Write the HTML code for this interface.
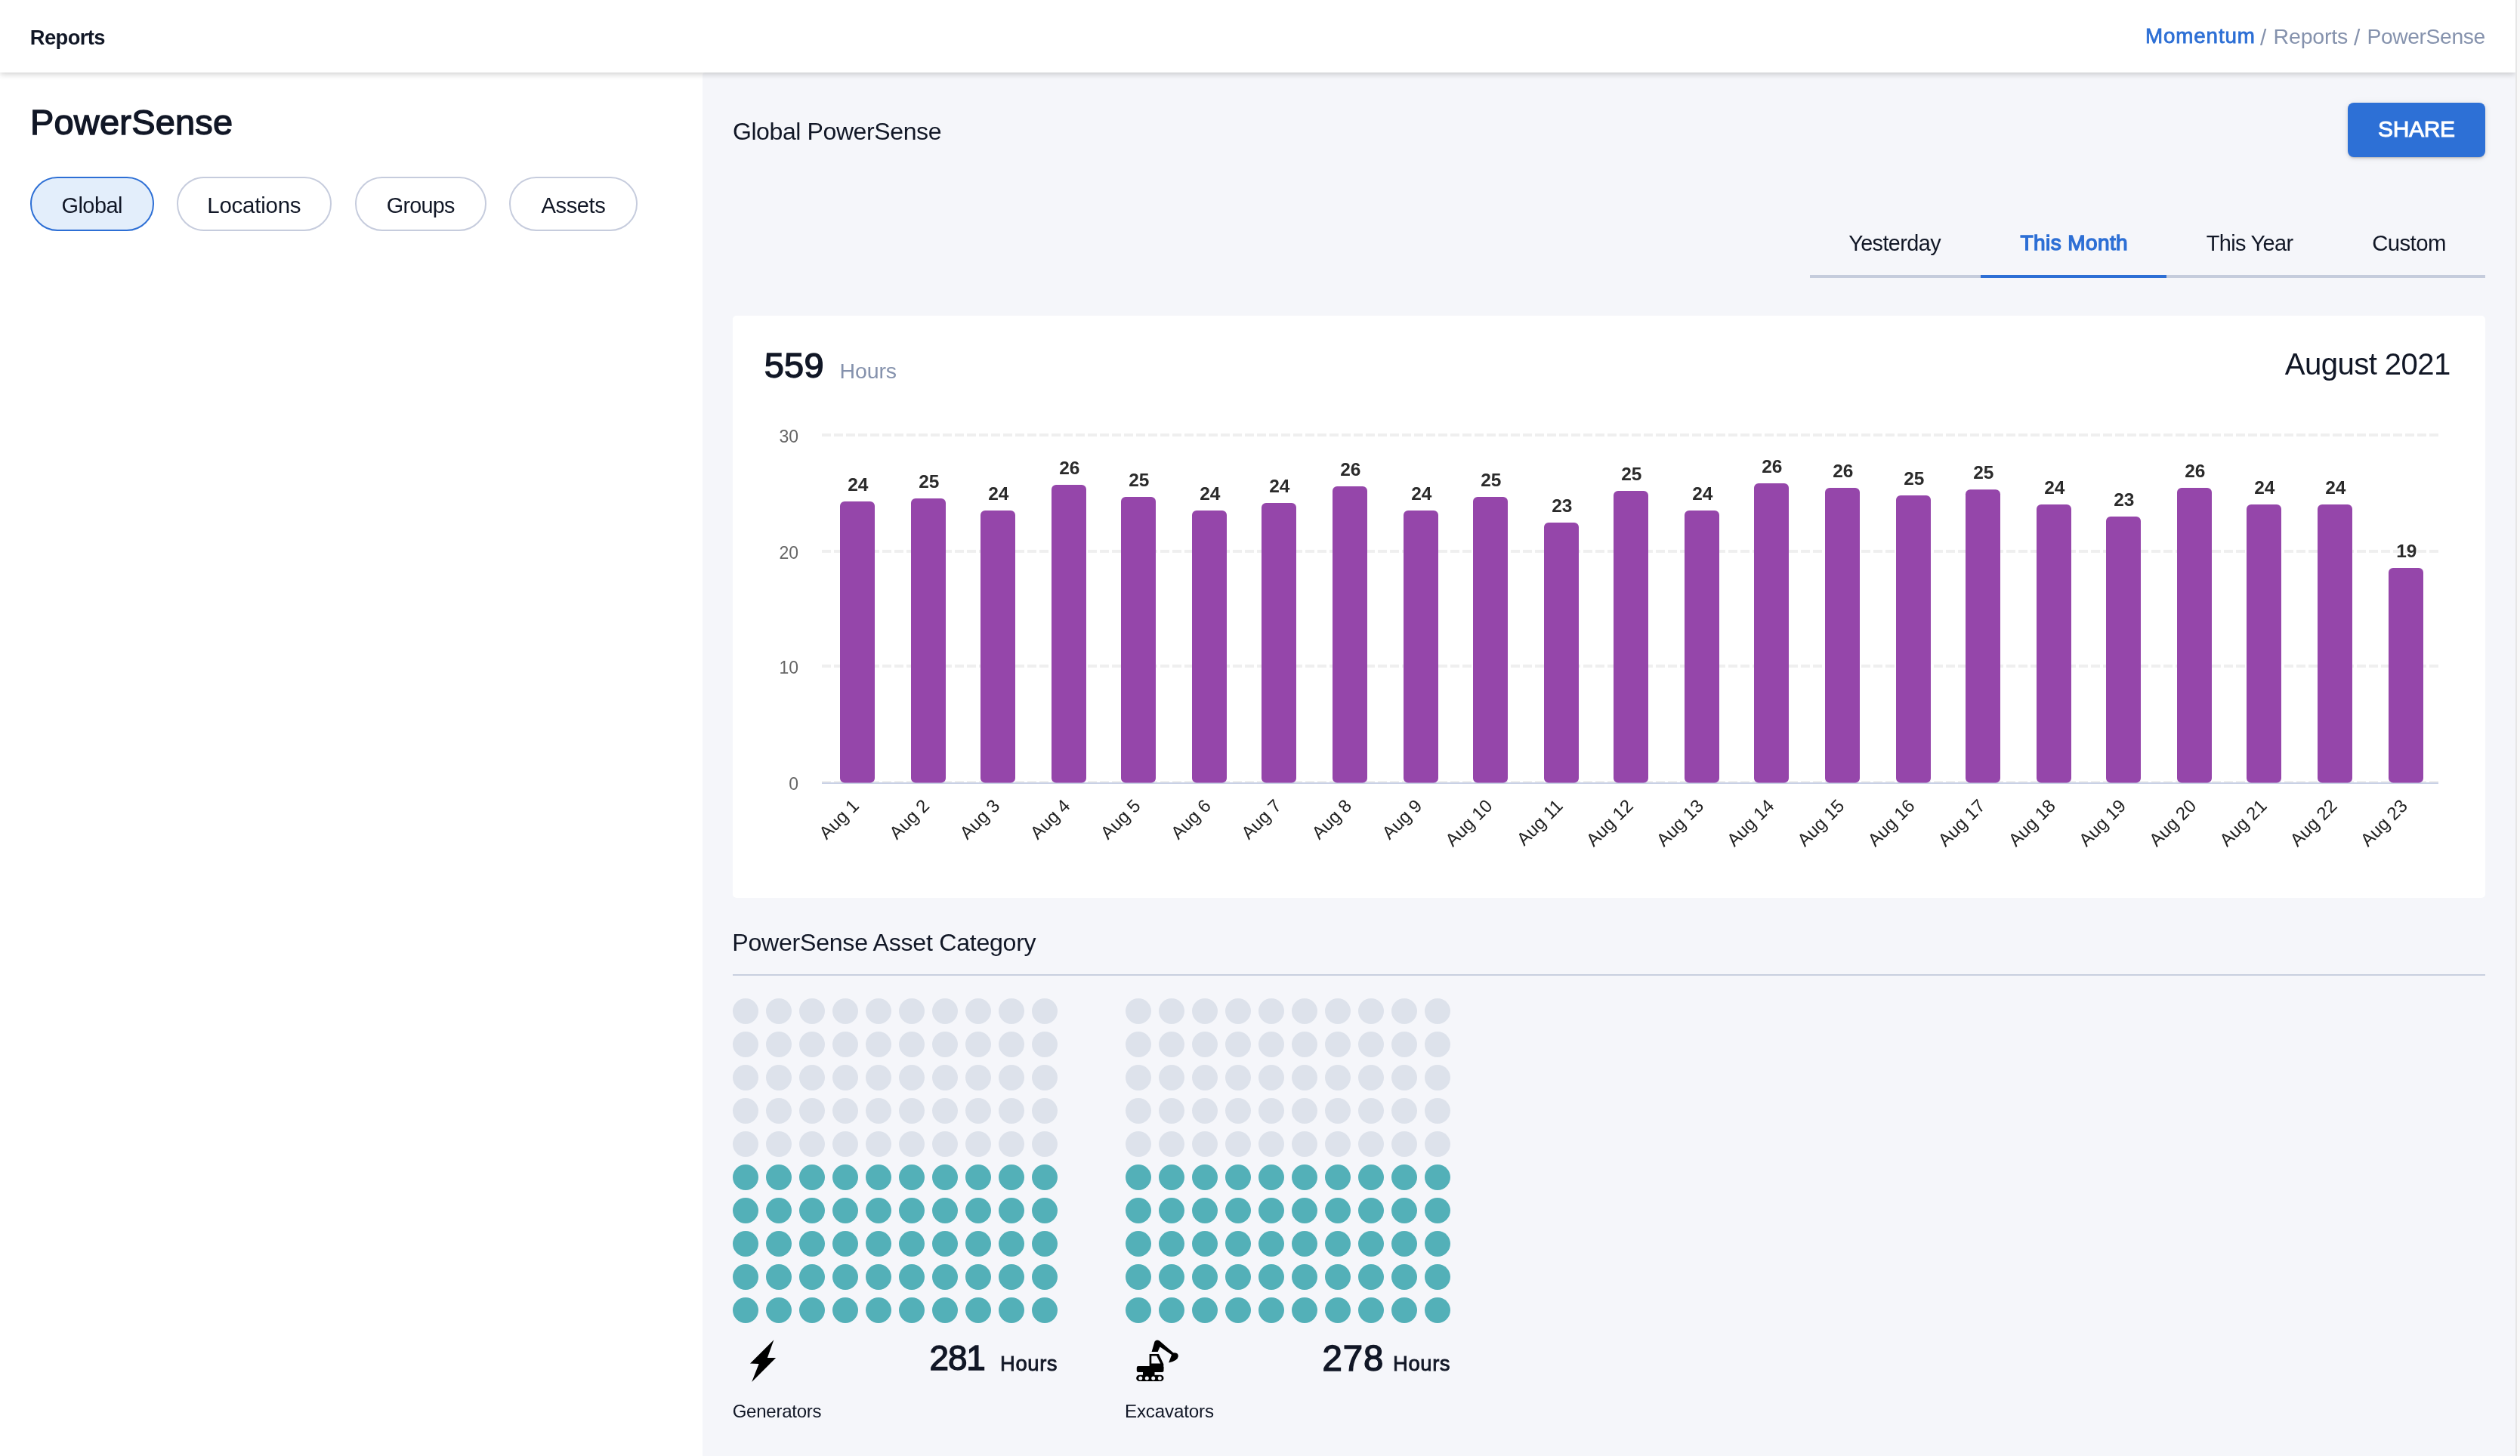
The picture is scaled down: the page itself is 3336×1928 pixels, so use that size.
<!DOCTYPE html>
<html><head><meta charset="utf-8"><title>PowerSense</title>
<style>
html,body{margin:0;padding:0;}
body{width:3336px;height:1928px;overflow:hidden;position:relative;background:#ffffff;font-family:"Liberation Sans",sans-serif;}
.t{position:absolute;white-space:nowrap;font-family:"Liberation Sans",sans-serif;}
#right{position:absolute;left:930px;top:96px;width:2400px;height:1832px;background:#f5f6fa;border-top-left-radius:4px;}
#sb{position:absolute;left:3330px;top:0;width:6px;height:1928px;background:#f8f8f8;border-left:2px solid #e6e6e6;box-sizing:border-box;z-index:6;}
#hdr{position:absolute;left:0;top:0;width:3330px;height:96px;background:#fff;box-shadow:0 2px 8px rgba(0,0,0,0.2);z-index:5;}
.pill{position:absolute;top:234px;height:72px;box-sizing:border-box;border:2px solid #c6ccdd;border-radius:36px;background:#fff;}
.pill.on{border-color:#2d6fd5;background:#e3eefb;}
#share{position:absolute;left:3108px;top:136px;width:182px;height:72px;background:#2d70d6;border-radius:8px;box-shadow:0 3px 2px -2px rgba(0,0,0,0.16),0 2px 4px 0 rgba(0,0,0,0.1),0 1px 10px 0 rgba(0,0,0,0.08);}
#tabline{position:absolute;left:2396px;top:364px;width:894px;height:4px;background:#c5ccdc;}
#tabon{position:absolute;left:2622px;top:364px;width:246px;height:4px;background:#2d6fd5;}
#card{position:absolute;left:970px;top:418px;width:2320px;height:771px;background:#fff;border-radius:5px;}
#divider{position:absolute;left:970px;top:1290px;width:2320px;height:2px;background:#c8cfdf;}
svg{position:absolute;left:0;top:0;overflow:visible;will-change:transform;}
#fg{position:absolute;left:0;top:0;z-index:10;will-change:transform;}
.vl{font-family:"Liberation Sans",sans-serif;font-weight:700;font-size:24.5px;fill:#2b2b2b;text-anchor:middle;}
.xl{font-family:"Liberation Sans",sans-serif;font-size:24px;fill:#222;text-anchor:end;}
.yl{font-family:"Liberation Sans",sans-serif;font-size:23px;fill:#666;text-anchor:end;}
</style></head>
<body>
<div id="right"></div>
<div id="sb"></div>
<div id="hdr"></div>
<div class="pill on" style="left:40px;width:164px"></div>
<div class="pill" style="left:234px;width:205px"></div>
<div class="pill" style="left:470px;width:174px"></div>
<div class="pill" style="left:674px;width:170px"></div>
<div id="share"></div>
<div id="tabline"></div>
<div id="tabon"></div>
<div id="card"></div>
<div id="divider"></div>
<svg width="3336" height="1928" viewBox="0 0 3336 1928">
<line x1="1088" y1="576" x2="3228" y2="576" stroke="#efefef" stroke-width="4" stroke-dasharray="12 4"/>
<line x1="1088" y1="730" x2="3228" y2="730" stroke="#efefef" stroke-width="4" stroke-dasharray="12 4"/>
<line x1="1088" y1="882" x2="3228" y2="882" stroke="#efefef" stroke-width="4" stroke-dasharray="12 4"/>
<line x1="1088" y1="1036" x2="3228" y2="1036" stroke="#efefef" stroke-width="4" stroke-dasharray="12 4"/>
<rect x="1088" y="1036" width="2140" height="2" fill="#c9d1e5"/>
<rect x="1112.00" y="663.90" width="46.0" height="372.60" rx="6" ry="6" fill="#9546aa"/>
<text x="1135.80" y="649.90" class="vl">24</text>
<text transform="translate(1138.50,1068.5) rotate(-45)" class="xl">Aug 1</text>
<rect x="1206.00" y="660.00" width="46.0" height="376.50" rx="6" ry="6" fill="#9546aa"/>
<text x="1229.80" y="646.00" class="vl">25</text>
<text transform="translate(1231.68,1068.5) rotate(-45)" class="xl">Aug 2</text>
<rect x="1298.00" y="675.90" width="46.0" height="360.60" rx="6" ry="6" fill="#9546aa"/>
<text x="1321.80" y="661.90" class="vl">24</text>
<text transform="translate(1324.86,1068.5) rotate(-45)" class="xl">Aug 3</text>
<rect x="1392.00" y="642.00" width="46.0" height="394.50" rx="6" ry="6" fill="#9546aa"/>
<text x="1415.80" y="628.00" class="vl">26</text>
<text transform="translate(1418.04,1068.5) rotate(-45)" class="xl">Aug 4</text>
<rect x="1484.00" y="657.90" width="46.0" height="378.60" rx="6" ry="6" fill="#9546aa"/>
<text x="1507.80" y="643.90" class="vl">25</text>
<text transform="translate(1511.22,1068.5) rotate(-45)" class="xl">Aug 5</text>
<rect x="1578.00" y="675.90" width="46.0" height="360.60" rx="6" ry="6" fill="#9546aa"/>
<text x="1601.80" y="661.90" class="vl">24</text>
<text transform="translate(1604.40,1068.5) rotate(-45)" class="xl">Aug 6</text>
<rect x="1670.00" y="666.00" width="46.0" height="370.50" rx="6" ry="6" fill="#9546aa"/>
<text x="1693.80" y="652.00" class="vl">24</text>
<text transform="translate(1697.58,1068.5) rotate(-45)" class="xl">Aug 7</text>
<rect x="1764.00" y="643.90" width="46.0" height="392.60" rx="6" ry="6" fill="#9546aa"/>
<text x="1787.80" y="629.90" class="vl">26</text>
<text transform="translate(1790.76,1068.5) rotate(-45)" class="xl">Aug 8</text>
<rect x="1858.00" y="675.90" width="46.0" height="360.60" rx="6" ry="6" fill="#9546aa"/>
<text x="1881.80" y="661.90" class="vl">24</text>
<text transform="translate(1883.94,1068.5) rotate(-45)" class="xl">Aug 9</text>
<rect x="1950.00" y="657.90" width="46.0" height="378.60" rx="6" ry="6" fill="#9546aa"/>
<text x="1973.80" y="643.90" class="vl">25</text>
<text transform="translate(1977.12,1068.5) rotate(-45)" class="xl">Aug 10</text>
<rect x="2044.00" y="692.10" width="46.0" height="344.40" rx="6" ry="6" fill="#9546aa"/>
<text x="2067.80" y="678.10" class="vl">23</text>
<text transform="translate(2070.30,1068.5) rotate(-45)" class="xl">Aug 11</text>
<rect x="2136.00" y="649.90" width="46.0" height="386.60" rx="6" ry="6" fill="#9546aa"/>
<text x="2159.80" y="635.90" class="vl">25</text>
<text transform="translate(2163.48,1068.5) rotate(-45)" class="xl">Aug 12</text>
<rect x="2230.00" y="675.90" width="46.0" height="360.60" rx="6" ry="6" fill="#9546aa"/>
<text x="2253.80" y="661.90" class="vl">24</text>
<text transform="translate(2256.66,1068.5) rotate(-45)" class="xl">Aug 13</text>
<rect x="2322.00" y="640.10" width="46.0" height="396.40" rx="6" ry="6" fill="#9546aa"/>
<text x="2345.80" y="626.10" class="vl">26</text>
<text transform="translate(2349.84,1068.5) rotate(-45)" class="xl">Aug 14</text>
<rect x="2416.00" y="646.10" width="46.0" height="390.40" rx="6" ry="6" fill="#9546aa"/>
<text x="2439.80" y="632.10" class="vl">26</text>
<text transform="translate(2443.02,1068.5) rotate(-45)" class="xl">Aug 15</text>
<rect x="2510.00" y="656.10" width="46.0" height="380.40" rx="6" ry="6" fill="#9546aa"/>
<text x="2533.80" y="642.10" class="vl">25</text>
<text transform="translate(2536.20,1068.5) rotate(-45)" class="xl">Aug 16</text>
<rect x="2602.00" y="648.20" width="46.0" height="388.30" rx="6" ry="6" fill="#9546aa"/>
<text x="2625.80" y="634.20" class="vl">25</text>
<text transform="translate(2629.38,1068.5) rotate(-45)" class="xl">Aug 17</text>
<rect x="2696.00" y="668.10" width="46.0" height="368.40" rx="6" ry="6" fill="#9546aa"/>
<text x="2719.80" y="654.10" class="vl">24</text>
<text transform="translate(2722.56,1068.5) rotate(-45)" class="xl">Aug 18</text>
<rect x="2788.00" y="684.00" width="46.0" height="352.50" rx="6" ry="6" fill="#9546aa"/>
<text x="2811.80" y="670.00" class="vl">23</text>
<text transform="translate(2815.74,1068.5) rotate(-45)" class="xl">Aug 19</text>
<rect x="2882.00" y="645.90" width="46.0" height="390.60" rx="6" ry="6" fill="#9546aa"/>
<text x="2905.80" y="631.90" class="vl">26</text>
<text transform="translate(2908.92,1068.5) rotate(-45)" class="xl">Aug 20</text>
<rect x="2974.00" y="668.10" width="46.0" height="368.40" rx="6" ry="6" fill="#9546aa"/>
<text x="2997.80" y="654.10" class="vl">24</text>
<text transform="translate(3002.10,1068.5) rotate(-45)" class="xl">Aug 21</text>
<rect x="3068.00" y="668.10" width="46.0" height="368.40" rx="6" ry="6" fill="#9546aa"/>
<text x="3091.80" y="654.10" class="vl">24</text>
<text transform="translate(3095.28,1068.5) rotate(-45)" class="xl">Aug 22</text>
<rect x="3162.00" y="752.00" width="46.0" height="284.50" rx="6" ry="6" fill="#9546aa"/>
<text x="3185.80" y="738.00" class="vl">19</text>
<text transform="translate(3188.46,1068.5) rotate(-45)" class="xl">Aug 23</text>
<text x="1057" y="586.20" class="yl">30</text>
<text x="1057" y="740.20" class="yl">20</text>
<text x="1057" y="892.20" class="yl">10</text>
<text x="1057" y="1046.20" class="yl">0</text>
<circle cx="987" cy="1339" r="17" fill="#dde2eb"/>
<circle cx="1031" cy="1339" r="17" fill="#dde2eb"/>
<circle cx="1075" cy="1339" r="17" fill="#dde2eb"/>
<circle cx="1119" cy="1339" r="17" fill="#dde2eb"/>
<circle cx="1163" cy="1339" r="17" fill="#dde2eb"/>
<circle cx="1207" cy="1339" r="17" fill="#dde2eb"/>
<circle cx="1251" cy="1339" r="17" fill="#dde2eb"/>
<circle cx="1295" cy="1339" r="17" fill="#dde2eb"/>
<circle cx="1339" cy="1339" r="17" fill="#dde2eb"/>
<circle cx="1383" cy="1339" r="17" fill="#dde2eb"/>
<circle cx="987" cy="1383" r="17" fill="#dde2eb"/>
<circle cx="1031" cy="1383" r="17" fill="#dde2eb"/>
<circle cx="1075" cy="1383" r="17" fill="#dde2eb"/>
<circle cx="1119" cy="1383" r="17" fill="#dde2eb"/>
<circle cx="1163" cy="1383" r="17" fill="#dde2eb"/>
<circle cx="1207" cy="1383" r="17" fill="#dde2eb"/>
<circle cx="1251" cy="1383" r="17" fill="#dde2eb"/>
<circle cx="1295" cy="1383" r="17" fill="#dde2eb"/>
<circle cx="1339" cy="1383" r="17" fill="#dde2eb"/>
<circle cx="1383" cy="1383" r="17" fill="#dde2eb"/>
<circle cx="987" cy="1427" r="17" fill="#dde2eb"/>
<circle cx="1031" cy="1427" r="17" fill="#dde2eb"/>
<circle cx="1075" cy="1427" r="17" fill="#dde2eb"/>
<circle cx="1119" cy="1427" r="17" fill="#dde2eb"/>
<circle cx="1163" cy="1427" r="17" fill="#dde2eb"/>
<circle cx="1207" cy="1427" r="17" fill="#dde2eb"/>
<circle cx="1251" cy="1427" r="17" fill="#dde2eb"/>
<circle cx="1295" cy="1427" r="17" fill="#dde2eb"/>
<circle cx="1339" cy="1427" r="17" fill="#dde2eb"/>
<circle cx="1383" cy="1427" r="17" fill="#dde2eb"/>
<circle cx="987" cy="1471" r="17" fill="#dde2eb"/>
<circle cx="1031" cy="1471" r="17" fill="#dde2eb"/>
<circle cx="1075" cy="1471" r="17" fill="#dde2eb"/>
<circle cx="1119" cy="1471" r="17" fill="#dde2eb"/>
<circle cx="1163" cy="1471" r="17" fill="#dde2eb"/>
<circle cx="1207" cy="1471" r="17" fill="#dde2eb"/>
<circle cx="1251" cy="1471" r="17" fill="#dde2eb"/>
<circle cx="1295" cy="1471" r="17" fill="#dde2eb"/>
<circle cx="1339" cy="1471" r="17" fill="#dde2eb"/>
<circle cx="1383" cy="1471" r="17" fill="#dde2eb"/>
<circle cx="987" cy="1515" r="17" fill="#dde2eb"/>
<circle cx="1031" cy="1515" r="17" fill="#dde2eb"/>
<circle cx="1075" cy="1515" r="17" fill="#dde2eb"/>
<circle cx="1119" cy="1515" r="17" fill="#dde2eb"/>
<circle cx="1163" cy="1515" r="17" fill="#dde2eb"/>
<circle cx="1207" cy="1515" r="17" fill="#dde2eb"/>
<circle cx="1251" cy="1515" r="17" fill="#dde2eb"/>
<circle cx="1295" cy="1515" r="17" fill="#dde2eb"/>
<circle cx="1339" cy="1515" r="17" fill="#dde2eb"/>
<circle cx="1383" cy="1515" r="17" fill="#dde2eb"/>
<circle cx="987" cy="1559" r="17" fill="#53b0b8"/>
<circle cx="1031" cy="1559" r="17" fill="#53b0b8"/>
<circle cx="1075" cy="1559" r="17" fill="#53b0b8"/>
<circle cx="1119" cy="1559" r="17" fill="#53b0b8"/>
<circle cx="1163" cy="1559" r="17" fill="#53b0b8"/>
<circle cx="1207" cy="1559" r="17" fill="#53b0b8"/>
<circle cx="1251" cy="1559" r="17" fill="#53b0b8"/>
<circle cx="1295" cy="1559" r="17" fill="#53b0b8"/>
<circle cx="1339" cy="1559" r="17" fill="#53b0b8"/>
<circle cx="1383" cy="1559" r="17" fill="#53b0b8"/>
<circle cx="987" cy="1603" r="17" fill="#53b0b8"/>
<circle cx="1031" cy="1603" r="17" fill="#53b0b8"/>
<circle cx="1075" cy="1603" r="17" fill="#53b0b8"/>
<circle cx="1119" cy="1603" r="17" fill="#53b0b8"/>
<circle cx="1163" cy="1603" r="17" fill="#53b0b8"/>
<circle cx="1207" cy="1603" r="17" fill="#53b0b8"/>
<circle cx="1251" cy="1603" r="17" fill="#53b0b8"/>
<circle cx="1295" cy="1603" r="17" fill="#53b0b8"/>
<circle cx="1339" cy="1603" r="17" fill="#53b0b8"/>
<circle cx="1383" cy="1603" r="17" fill="#53b0b8"/>
<circle cx="987" cy="1647" r="17" fill="#53b0b8"/>
<circle cx="1031" cy="1647" r="17" fill="#53b0b8"/>
<circle cx="1075" cy="1647" r="17" fill="#53b0b8"/>
<circle cx="1119" cy="1647" r="17" fill="#53b0b8"/>
<circle cx="1163" cy="1647" r="17" fill="#53b0b8"/>
<circle cx="1207" cy="1647" r="17" fill="#53b0b8"/>
<circle cx="1251" cy="1647" r="17" fill="#53b0b8"/>
<circle cx="1295" cy="1647" r="17" fill="#53b0b8"/>
<circle cx="1339" cy="1647" r="17" fill="#53b0b8"/>
<circle cx="1383" cy="1647" r="17" fill="#53b0b8"/>
<circle cx="987" cy="1691" r="17" fill="#53b0b8"/>
<circle cx="1031" cy="1691" r="17" fill="#53b0b8"/>
<circle cx="1075" cy="1691" r="17" fill="#53b0b8"/>
<circle cx="1119" cy="1691" r="17" fill="#53b0b8"/>
<circle cx="1163" cy="1691" r="17" fill="#53b0b8"/>
<circle cx="1207" cy="1691" r="17" fill="#53b0b8"/>
<circle cx="1251" cy="1691" r="17" fill="#53b0b8"/>
<circle cx="1295" cy="1691" r="17" fill="#53b0b8"/>
<circle cx="1339" cy="1691" r="17" fill="#53b0b8"/>
<circle cx="1383" cy="1691" r="17" fill="#53b0b8"/>
<circle cx="987" cy="1735" r="17" fill="#53b0b8"/>
<circle cx="1031" cy="1735" r="17" fill="#53b0b8"/>
<circle cx="1075" cy="1735" r="17" fill="#53b0b8"/>
<circle cx="1119" cy="1735" r="17" fill="#53b0b8"/>
<circle cx="1163" cy="1735" r="17" fill="#53b0b8"/>
<circle cx="1207" cy="1735" r="17" fill="#53b0b8"/>
<circle cx="1251" cy="1735" r="17" fill="#53b0b8"/>
<circle cx="1295" cy="1735" r="17" fill="#53b0b8"/>
<circle cx="1339" cy="1735" r="17" fill="#53b0b8"/>
<circle cx="1383" cy="1735" r="17" fill="#53b0b8"/>
<circle cx="1507" cy="1339" r="17" fill="#dde2eb"/>
<circle cx="1551" cy="1339" r="17" fill="#dde2eb"/>
<circle cx="1595" cy="1339" r="17" fill="#dde2eb"/>
<circle cx="1639" cy="1339" r="17" fill="#dde2eb"/>
<circle cx="1683" cy="1339" r="17" fill="#dde2eb"/>
<circle cx="1727" cy="1339" r="17" fill="#dde2eb"/>
<circle cx="1771" cy="1339" r="17" fill="#dde2eb"/>
<circle cx="1815" cy="1339" r="17" fill="#dde2eb"/>
<circle cx="1859" cy="1339" r="17" fill="#dde2eb"/>
<circle cx="1903" cy="1339" r="17" fill="#dde2eb"/>
<circle cx="1507" cy="1383" r="17" fill="#dde2eb"/>
<circle cx="1551" cy="1383" r="17" fill="#dde2eb"/>
<circle cx="1595" cy="1383" r="17" fill="#dde2eb"/>
<circle cx="1639" cy="1383" r="17" fill="#dde2eb"/>
<circle cx="1683" cy="1383" r="17" fill="#dde2eb"/>
<circle cx="1727" cy="1383" r="17" fill="#dde2eb"/>
<circle cx="1771" cy="1383" r="17" fill="#dde2eb"/>
<circle cx="1815" cy="1383" r="17" fill="#dde2eb"/>
<circle cx="1859" cy="1383" r="17" fill="#dde2eb"/>
<circle cx="1903" cy="1383" r="17" fill="#dde2eb"/>
<circle cx="1507" cy="1427" r="17" fill="#dde2eb"/>
<circle cx="1551" cy="1427" r="17" fill="#dde2eb"/>
<circle cx="1595" cy="1427" r="17" fill="#dde2eb"/>
<circle cx="1639" cy="1427" r="17" fill="#dde2eb"/>
<circle cx="1683" cy="1427" r="17" fill="#dde2eb"/>
<circle cx="1727" cy="1427" r="17" fill="#dde2eb"/>
<circle cx="1771" cy="1427" r="17" fill="#dde2eb"/>
<circle cx="1815" cy="1427" r="17" fill="#dde2eb"/>
<circle cx="1859" cy="1427" r="17" fill="#dde2eb"/>
<circle cx="1903" cy="1427" r="17" fill="#dde2eb"/>
<circle cx="1507" cy="1471" r="17" fill="#dde2eb"/>
<circle cx="1551" cy="1471" r="17" fill="#dde2eb"/>
<circle cx="1595" cy="1471" r="17" fill="#dde2eb"/>
<circle cx="1639" cy="1471" r="17" fill="#dde2eb"/>
<circle cx="1683" cy="1471" r="17" fill="#dde2eb"/>
<circle cx="1727" cy="1471" r="17" fill="#dde2eb"/>
<circle cx="1771" cy="1471" r="17" fill="#dde2eb"/>
<circle cx="1815" cy="1471" r="17" fill="#dde2eb"/>
<circle cx="1859" cy="1471" r="17" fill="#dde2eb"/>
<circle cx="1903" cy="1471" r="17" fill="#dde2eb"/>
<circle cx="1507" cy="1515" r="17" fill="#dde2eb"/>
<circle cx="1551" cy="1515" r="17" fill="#dde2eb"/>
<circle cx="1595" cy="1515" r="17" fill="#dde2eb"/>
<circle cx="1639" cy="1515" r="17" fill="#dde2eb"/>
<circle cx="1683" cy="1515" r="17" fill="#dde2eb"/>
<circle cx="1727" cy="1515" r="17" fill="#dde2eb"/>
<circle cx="1771" cy="1515" r="17" fill="#dde2eb"/>
<circle cx="1815" cy="1515" r="17" fill="#dde2eb"/>
<circle cx="1859" cy="1515" r="17" fill="#dde2eb"/>
<circle cx="1903" cy="1515" r="17" fill="#dde2eb"/>
<circle cx="1507" cy="1559" r="17" fill="#53b0b8"/>
<circle cx="1551" cy="1559" r="17" fill="#53b0b8"/>
<circle cx="1595" cy="1559" r="17" fill="#53b0b8"/>
<circle cx="1639" cy="1559" r="17" fill="#53b0b8"/>
<circle cx="1683" cy="1559" r="17" fill="#53b0b8"/>
<circle cx="1727" cy="1559" r="17" fill="#53b0b8"/>
<circle cx="1771" cy="1559" r="17" fill="#53b0b8"/>
<circle cx="1815" cy="1559" r="17" fill="#53b0b8"/>
<circle cx="1859" cy="1559" r="17" fill="#53b0b8"/>
<circle cx="1903" cy="1559" r="17" fill="#53b0b8"/>
<circle cx="1507" cy="1603" r="17" fill="#53b0b8"/>
<circle cx="1551" cy="1603" r="17" fill="#53b0b8"/>
<circle cx="1595" cy="1603" r="17" fill="#53b0b8"/>
<circle cx="1639" cy="1603" r="17" fill="#53b0b8"/>
<circle cx="1683" cy="1603" r="17" fill="#53b0b8"/>
<circle cx="1727" cy="1603" r="17" fill="#53b0b8"/>
<circle cx="1771" cy="1603" r="17" fill="#53b0b8"/>
<circle cx="1815" cy="1603" r="17" fill="#53b0b8"/>
<circle cx="1859" cy="1603" r="17" fill="#53b0b8"/>
<circle cx="1903" cy="1603" r="17" fill="#53b0b8"/>
<circle cx="1507" cy="1647" r="17" fill="#53b0b8"/>
<circle cx="1551" cy="1647" r="17" fill="#53b0b8"/>
<circle cx="1595" cy="1647" r="17" fill="#53b0b8"/>
<circle cx="1639" cy="1647" r="17" fill="#53b0b8"/>
<circle cx="1683" cy="1647" r="17" fill="#53b0b8"/>
<circle cx="1727" cy="1647" r="17" fill="#53b0b8"/>
<circle cx="1771" cy="1647" r="17" fill="#53b0b8"/>
<circle cx="1815" cy="1647" r="17" fill="#53b0b8"/>
<circle cx="1859" cy="1647" r="17" fill="#53b0b8"/>
<circle cx="1903" cy="1647" r="17" fill="#53b0b8"/>
<circle cx="1507" cy="1691" r="17" fill="#53b0b8"/>
<circle cx="1551" cy="1691" r="17" fill="#53b0b8"/>
<circle cx="1595" cy="1691" r="17" fill="#53b0b8"/>
<circle cx="1639" cy="1691" r="17" fill="#53b0b8"/>
<circle cx="1683" cy="1691" r="17" fill="#53b0b8"/>
<circle cx="1727" cy="1691" r="17" fill="#53b0b8"/>
<circle cx="1771" cy="1691" r="17" fill="#53b0b8"/>
<circle cx="1815" cy="1691" r="17" fill="#53b0b8"/>
<circle cx="1859" cy="1691" r="17" fill="#53b0b8"/>
<circle cx="1903" cy="1691" r="17" fill="#53b0b8"/>
<circle cx="1507" cy="1735" r="17" fill="#53b0b8"/>
<circle cx="1551" cy="1735" r="17" fill="#53b0b8"/>
<circle cx="1595" cy="1735" r="17" fill="#53b0b8"/>
<circle cx="1639" cy="1735" r="17" fill="#53b0b8"/>
<circle cx="1683" cy="1735" r="17" fill="#53b0b8"/>
<circle cx="1727" cy="1735" r="17" fill="#53b0b8"/>
<circle cx="1771" cy="1735" r="17" fill="#53b0b8"/>
<circle cx="1815" cy="1735" r="17" fill="#53b0b8"/>
<circle cx="1859" cy="1735" r="17" fill="#53b0b8"/>
<circle cx="1903" cy="1735" r="17" fill="#53b0b8"/>
<path d="M1024.4,1774.2 L993,1805.6 L1004.6,1806 L995.2,1830 L1027.1,1798 L1015.9,1798 Z" fill="#000"/>
<g fill="#000">
<rect x="1504.2" y="1820.7" width="36.3" height="8.4" rx="4.2"/>
<rect x="1513" y="1815" width="15.5" height="7"/>
<rect x="1504.8" y="1808.9" width="35.7" height="8.2" rx="2"/>
<path d="M1521.6,1810 L1521.6,1034 Z"/>
<path d="M1521.6,1812 L1521.6,1793 L1534,1793 L1540.3,1806.2 L1540.3,1812 Z M1524.3,1795.6 L1524.3,1805.6 L1536.2,1805.6 L1531.2,1795.6 Z" fill-rule="evenodd"/>
<circle cx="1509.8" cy="1825" r="2.5" fill="#f5f6fa"/><circle cx="1518.3" cy="1825" r="2.5" fill="#f5f6fa"/><circle cx="1526.7" cy="1825" r="2.5" fill="#f5f6fa"/><circle cx="1535.3" cy="1825" r="2.5" fill="#f5f6fa"/>
<path d="M1524.6,1790 L1528.5,1776.5 Q1531,1773 1535,1775.5 L1553.2,1791.3 Q1560,1791 1559.8,1796 Q1559,1802 1547.1,1804.5 L1551,1794 L1535.6,1783.6 L1532.6,1790 Z"/>
</g>
</svg>
<div id="fg">
<div class="t" style="left:39.82px;top:36.42px;font-size:27.35px;line-height:27.35px;letter-spacing:-0.611px;font-weight:700;color:#111726;">Reports</div>
<div class="t" style="left:2840.08px;top:33.86px;font-size:27.76px;line-height:27.76px;letter-spacing:0.862px;font-weight:400;color:#2d6fd5;-webkit-text-stroke:0.81px #2d6fd5;">Momentum</div>
<div class="t" style="left:2991.90px;top:34.62px;font-size:29.80px;line-height:29.80px;font-weight:400;color:#8592ad;">/</div>
<div class="t" style="left:3009.62px;top:33.59px;font-size:28.55px;line-height:28.55px;letter-spacing:-0.208px;font-weight:400;color:#8592ad;">Reports</div>
<div class="t" style="left:3115.90px;top:34.62px;font-size:29.80px;line-height:29.80px;font-weight:400;color:#8592ad;">/</div>
<div class="t" style="left:3133.44px;top:33.82px;font-size:28.28px;line-height:28.28px;letter-spacing:-0.393px;font-weight:400;color:#8592ad;">PowerSense</div>
<div class="t" style="left:40.03px;top:138.97px;font-size:46.95px;line-height:46.95px;letter-spacing:0.221px;font-weight:400;color:#111726;-webkit-text-stroke:1.37px #111726;">PowerSense</div>
<div class="t" style="left:81.55px;top:257.77px;font-size:28.93px;line-height:28.93px;letter-spacing:-0.555px;font-weight:400;color:#111726;">Global</div>
<div class="t" style="left:274.34px;top:257.31px;font-size:29.47px;line-height:29.47px;letter-spacing:-0.241px;font-weight:400;color:#111726;">Locations</div>
<div class="t" style="left:511.86px;top:257.91px;font-size:28.76px;line-height:28.76px;letter-spacing:-0.747px;font-weight:400;color:#111726;">Groups</div>
<div class="t" style="left:716.55px;top:257.56px;font-size:29.17px;line-height:29.17px;letter-spacing:-0.449px;font-weight:400;color:#111726;">Assets</div>
<div class="t" style="left:969.90px;top:158.30px;font-size:32.05px;line-height:32.05px;letter-spacing:-0.415px;font-weight:400;color:#111726;">Global PowerSense</div>
<div class="t" style="left:3148.11px;top:155.97px;font-size:30.02px;line-height:30.02px;letter-spacing:-0.395px;font-weight:400;color:#ffffff;-webkit-text-stroke:0.93px #ffffff;">SHARE</div>
<div class="t" style="left:2447.18px;top:307.54px;font-size:28.85px;line-height:28.85px;letter-spacing:-0.593px;font-weight:400;color:#111726;">Yesterday</div>
<div class="t" style="left:2674.57px;top:307.59px;font-size:27.99px;line-height:27.99px;letter-spacing:0.407px;font-weight:400;color:#2d6fd5;-webkit-text-stroke:1.35px #2d6fd5;">This Month</div>
<div class="t" style="left:2920.68px;top:307.55px;font-size:28.95px;line-height:28.95px;letter-spacing:-0.656px;font-weight:400;color:#111726;">This Year</div>
<div class="t" style="left:3140.13px;top:307.20px;font-size:29.36px;line-height:29.36px;letter-spacing:-0.572px;font-weight:400;color:#111726;">Custom</div>
<div class="t" style="left:1011.71px;top:461.07px;font-size:46.95px;line-height:46.95px;letter-spacing:0.275px;font-weight:400;color:#111726;-webkit-text-stroke:1.37px #111726;">559</div>
<div class="t" style="left:1111.52px;top:477.49px;font-size:28.55px;line-height:28.55px;letter-spacing:-0.148px;font-weight:400;color:#8592ad;">Hours</div>
<div class="t" style="left:3024.80px;top:461.61px;font-size:40.11px;line-height:40.11px;letter-spacing:-0.580px;font-weight:400;color:#111726;">August 2021</div>
<div class="t" style="left:969.33px;top:1232.42px;font-size:32.14px;line-height:32.14px;letter-spacing:-0.275px;font-weight:400;color:#111726;">PowerSense Asset Category</div>
<div class="t" style="left:1230.60px;top:1776.00px;font-size:45.85px;line-height:45.85px;letter-spacing:-1.186px;font-weight:400;color:#111726;-webkit-text-stroke:1.38px #111726;">281</div>
<div class="t" style="left:1324.10px;top:1792.00px;font-size:27.48px;line-height:27.48px;letter-spacing:0.556px;font-weight:400;color:#111726;-webkit-text-stroke:0.80px #111726;">Hours</div>
<div class="t" style="left:969.70px;top:1857.27px;font-size:24.01px;line-height:24.01px;letter-spacing:-0.246px;font-weight:400;color:#111726;">Generators</div>
<div class="t" style="left:1750.52px;top:1774.71px;font-size:47.36px;line-height:47.36px;letter-spacing:0.910px;font-weight:400;color:#111726;-webkit-text-stroke:1.38px #111726;">278</div>
<div class="t" style="left:1844.10px;top:1792.00px;font-size:27.48px;line-height:27.48px;letter-spacing:0.556px;font-weight:400;color:#111726;-webkit-text-stroke:0.80px #111726;">Hours</div>
<div class="t" style="left:1488.97px;top:1857.14px;font-size:24.17px;line-height:24.17px;letter-spacing:-0.158px;font-weight:400;color:#111726;">Excavators</div>
</div>
</body></html>
